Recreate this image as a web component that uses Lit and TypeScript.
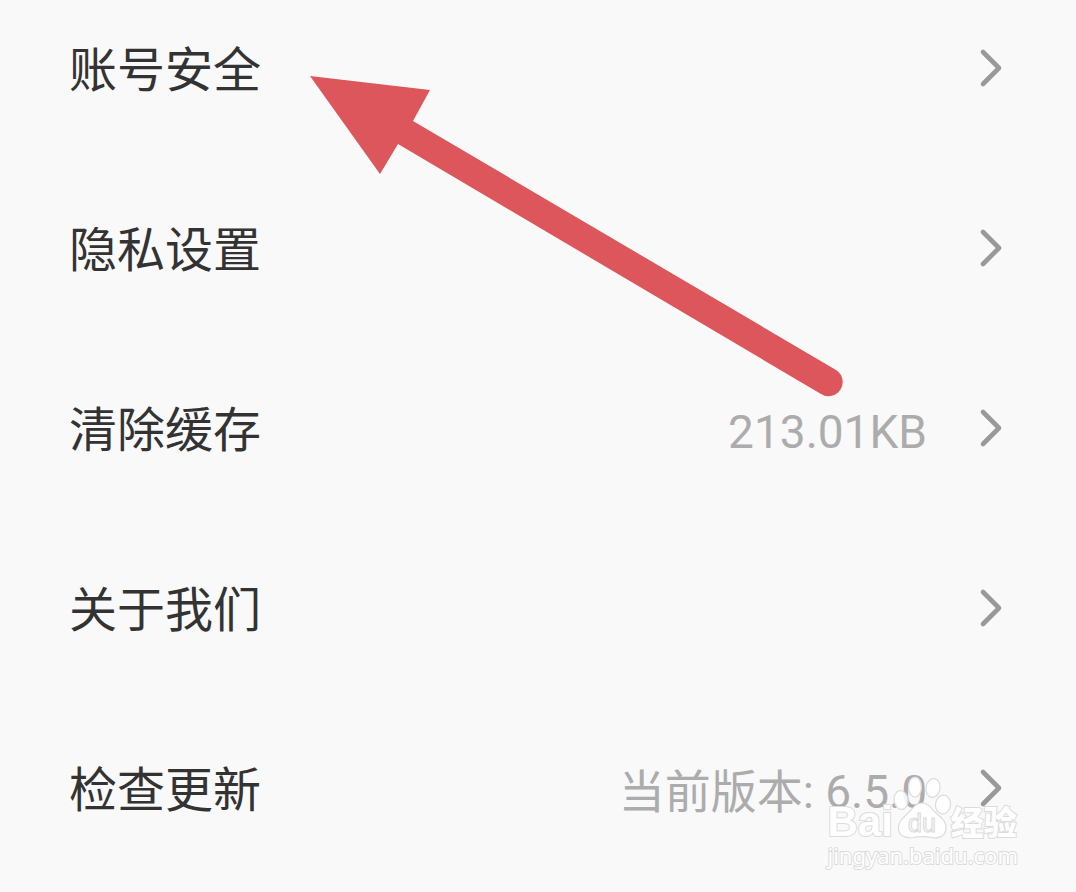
import { LitElement, html, css, svg } from "lit";
import { customElement, property } from "lit/decorators.js";

@customElement("setting-row")
class SettingRow extends LitElement {
  @property() label = "";
  @property() value = "";

  static styles = css`
    :host { display: block; }
    .row {
      display: flex;
      align-items: center;
      width: 100%;
      height: 72px;
      margin: 0;
      padding: 0 72px 4px 69px;
      border: 0;
      background: transparent;
      font-family: "Noto Sans CJK SC", sans-serif;
      color: #333;
      text-align: left;
      cursor: pointer;
    }
    .label { flex: 1; font-size: 48px; line-height: 64px; padding-bottom: 4px; }
    .value {
      font-family: Roboto, "Noto Sans CJK SC", sans-serif;
      font-size: 46px;
      line-height: 64px;
      color: #acacac;
      margin-right: 49px;
      padding-top: 8px;
    }
    .chevron { display: block; width: 28px; height: 40px; }
  `;

  render() {
    return html`<button class="row" type="button">
      <span class="label">${this.label}</span>
      ${this.value ? html`<span class="value">${this.value}</span>` : ""}
      <svg class="chevron" viewBox="0 0 28 40" fill="none" stroke="#999" stroke-width="4.6" stroke-linecap="round" stroke-linejoin="round" aria-hidden="true">
        <path d="M7 4 L23 20 L7 36" />
      </svg>
    </button>`;
  }
}

@customElement("brand-mark")
class BrandMark extends LitElement {
  static styles = css`
    :host { display: block; color: #fff; }
    .name { display: flex; align-items: flex-end; height: 64px; }
    .latin, .han, .site {
      -webkit-text-stroke: 2px #dcdcdc;
      paint-order: stroke fill;
      white-space: nowrap;
    }
    .latin { font: 700 42px/36px "Liberation Sans", sans-serif; }
    .han { font: 900 33px/38px "Noto Sans CJK SC", sans-serif; margin-left: 4px; }
    .paw { display: block; width: 54px; height: 64px; overflow: visible; }
    .du { font: 400 25px "Liberation Sans", sans-serif; }
    .site { font: 400 22px/30px "Noto Sans", sans-serif; padding-bottom: 2px; }
  `;

  render() {
    return html`
      <div class="name">
        <span class="latin">Bai</span>
        <svg class="paw" viewBox="0 0 54 64" fill="#fff" fill-opacity="0.85" stroke="#dcdcdc" stroke-width="1.2">
          ${svg`
            <ellipse cx="8" cy="24" rx="7" ry="9.5" transform="rotate(-8 8 24)" />
            <ellipse cx="22" cy="11" rx="6.5" ry="10" />
            <ellipse cx="40" cy="12" rx="7" ry="9.5" transform="rotate(10 40 12)" />
            <ellipse cx="50" cy="28.5" rx="7.5" ry="9.5" transform="rotate(8 50 28.5)" />
            <path fill-opacity="1" d="M29 27 C36 27 38 33 44 38 C50 43 54 47 53 53 C52 61 45 62.5 39 61.5 C33 60.5 26 60.5 20 61.5 C13 62.5 6 60 5.5 53 C5 46 9 43 14 38 C20 33 22 27 29 27 Z" />
            <text class="du" x="29" y="56" text-anchor="middle">du</text>
          `}
        </svg>
        <span class="han">经验</span>
      </div>
      <div class="site">jingyan.baidu.com</div>
    `;
  }
}

@customElement("app-root")
class AppRoot extends LitElement {
  static styles = css`
    :host {
      display: block;
      position: relative;
      min-height: 100vh;
      overflow: hidden;
      background: #f9f9f9;
    }
    .list {
      display: grid;
      gap: 108px;
      margin: 0;
      padding: 34px 0 66px;
      list-style: none;
    }
    .pointer {
      position: absolute;
      left: 310px;
      top: 76px;
      width: 534px;
      height: 322px;
      pointer-events: none;
    }
    .mark {
      position: absolute;
      right: 58px;
      bottom: 20px;
      pointer-events: none;
    }
  `;

  private items = [
    { label: "账号安全", value: "" },
    { label: "隐私设置", value: "" },
    { label: "清除缓存", value: "213.01KB" },
    { label: "关于我们", value: "" },
    { label: "检查更新", value: "当前版本: 6.5.0" },
  ];

  render() {
    return html`
      <ul class="list">
        ${this.items.map((i) => html`<li><setting-row .label=${i.label} .value=${i.value}></setting-row></li>`)}
      </ul>
      <svg class="pointer" viewBox="0 0 534 322" aria-hidden="true">
        <path fill="#dc565b" d="M0 0 L120 14 L103 45 L526 294 A14 14 0 0 1 511 318 L88 68 L70 98 Z" />
      </svg>
      <brand-mark class="mark"></brand-mark>
    `;
  }
}
